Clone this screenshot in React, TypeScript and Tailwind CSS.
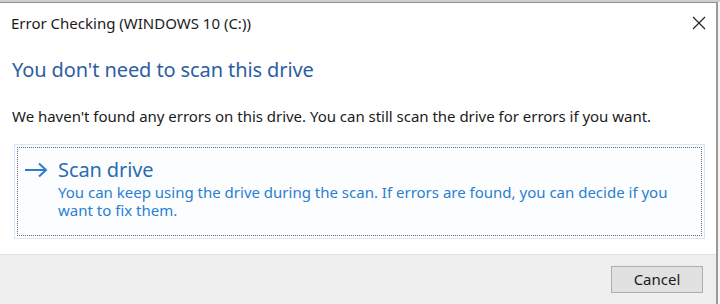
import React from "react";

export default function App() {
  const font = { fontFamily: '"Noto Sans", "Open Sans", sans-serif' };
  return (
    <div className="w-[720px] h-[304px] bg-[#f4f4f4] overflow-hidden" style={font}>
      <div className="h-[2px] bg-[#cfcfcf]" />
      <div className="flex h-[302px]">
        <div className="w-[716px] flex flex-col bg-white border-t border-[#8e8e8e]">
          <div className="flex items-center justify-between h-[40px] pl-[11px] pr-[8px]">
            <span className="text-[15px] text-[#1b1b1b]">Error Checking (WINDOWS 10 (C:))</span>
            <svg width="14" height="14" viewBox="0 0 14 14" className="mr-[2px]">
              <path d="M1 1 L13 13 M13 1 L1 13" stroke="#222" strokeWidth="1.2" />
            </svg>
          </div>
          <div className="pl-[12px] pt-[14px] text-[20px] leading-[26px] text-[#2d5ea3] tracking-[-0.1px]">
            You don't need to scan this drive
          </div>
          <div className="pl-[12px] pt-[23px] text-[15px] leading-[20px] text-[#1b1b1b] tracking-[-0.02px]">
            We haven't found any errors on this drive. You can still scan the drive for errors if you want.
          </div>
          <div className="ml-[14px] mr-[11px] mt-[18px] border border-[#d5e6f5] p-[2px] bg-[#fcfdff]">
            <div className="border border-dotted border-[#6e6e6e] h-[89px] flex pl-[6px] pt-[9px]">
              <svg width="24" height="18" viewBox="0 0 24 18" className="mt-[4px] shrink-0">
                <path d="M1 9 H22 M15 2.5 L22 9 L15 15.5" stroke="#2e7bcf" strokeWidth="2" fill="none" />
              </svg>
              <div className="pl-[10px]">
                <div className="text-[20px] leading-[26px] text-[#2b6cb0] tracking-[-0.1px]">Scan drive</div>
                <div className="text-[15px] leading-[18px] text-[#2a7fd0] w-[612px]">
                  You can keep using the drive during the scan. If errors are found, you can decide if you want to fix them.
                </div>
              </div>
            </div>
          </div>
          <div className="mt-auto h-[50px] bg-[#efefef] border-t border-[#e2e2e2] flex items-center justify-end pr-[13px]">
            <button className="w-[92px] h-[27px] bg-[#e1e1e1] border border-[#adadad] text-[15px] text-[#1b1b1b]" style={font}>
              Cancel
            </button>
          </div>
        </div>
        <div className="w-[2px] bg-[#9a9a9a]" />
        <div className="flex-1 bg-[#f6f6f6]" />
      </div>
    </div>
  );
}
